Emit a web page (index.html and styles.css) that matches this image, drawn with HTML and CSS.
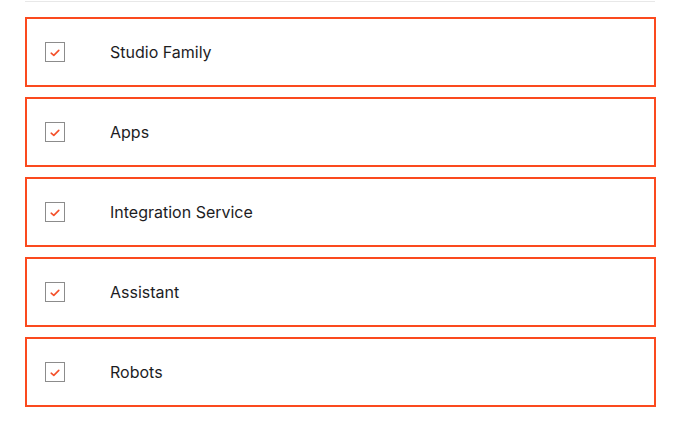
FILE: index.html
```html
<!DOCTYPE html>
<html>
<head>
<meta charset="utf-8">
<link rel="stylesheet" href="styles.css">
</head>
<body>
<div class="page">
  <div class="divider"></div>
  <ul class="list">
    <li class="item"><span class="check"><svg width="10" height="8" viewBox="0 0 10 8"><path d="M1.2 4.2 L3.8 6.4 L8.8 1.4" fill="none" stroke="#f4502a" stroke-width="1.6" stroke-linecap="round" stroke-linejoin="round"/></svg></span><span class="label">Studio Family</span></li>
    <li class="item"><span class="check"><svg width="10" height="8" viewBox="0 0 10 8"><path d="M1.2 4.2 L3.8 6.4 L8.8 1.4" fill="none" stroke="#f4502a" stroke-width="1.6" stroke-linecap="round" stroke-linejoin="round"/></svg></span><span class="label">Apps</span></li>
    <li class="item"><span class="check"><svg width="10" height="8" viewBox="0 0 10 8"><path d="M1.2 4.2 L3.8 6.4 L8.8 1.4" fill="none" stroke="#f4502a" stroke-width="1.6" stroke-linecap="round" stroke-linejoin="round"/></svg></span><span class="label">Integration Service</span></li>
    <li class="item"><span class="check"><svg width="10" height="8" viewBox="0 0 10 8"><path d="M1.2 4.2 L3.8 6.4 L8.8 1.4" fill="none" stroke="#f4502a" stroke-width="1.6" stroke-linecap="round" stroke-linejoin="round"/></svg></span><span class="label">Assistant</span></li>
    <li class="item"><span class="check"><svg width="10" height="8" viewBox="0 0 10 8"><path d="M1.2 4.2 L3.8 6.4 L8.8 1.4" fill="none" stroke="#f4502a" stroke-width="1.6" stroke-linecap="round" stroke-linejoin="round"/></svg></span><span class="label">Robots</span></li>
  </ul>
</div>
</body>
</html>
```
FILE: styles.css
```css
html, body {
  margin: 0;
  padding: 0;
  background: #ffffff;
}
body {
  font-family: Inter, "Noto Sans", sans-serif;
  color: #1d1d1f;
}
.page {
  padding: 1px 0 0 25px;
  width: 631px;
}
.divider {
  height: 1px;
  width: 630px;
  background: #e8e8e8;
}
.list {
  list-style: none;
  margin: 15px 0 0 0;
  padding: 0;
  display: flex;
  flex-direction: column;
  gap: 10px;
}
.item {
  box-sizing: border-box;
  height: 70px;
  border: 2px solid #fb4a1e;
  display: flex;
  align-items: center;
  padding-left: 18px;
}
.check {
  box-sizing: border-box;
  width: 20px;
  height: 20px;
  border: 1px solid #8c8c8c;
  display: flex;
  align-items: center;
  justify-content: center;
  flex-shrink: 0;
}
.check svg {
  display: block;
  margin-top: 1px;
}
.label {
  margin-left: 45px;
  font-size: 16px;
  line-height: 20px;
}
```
